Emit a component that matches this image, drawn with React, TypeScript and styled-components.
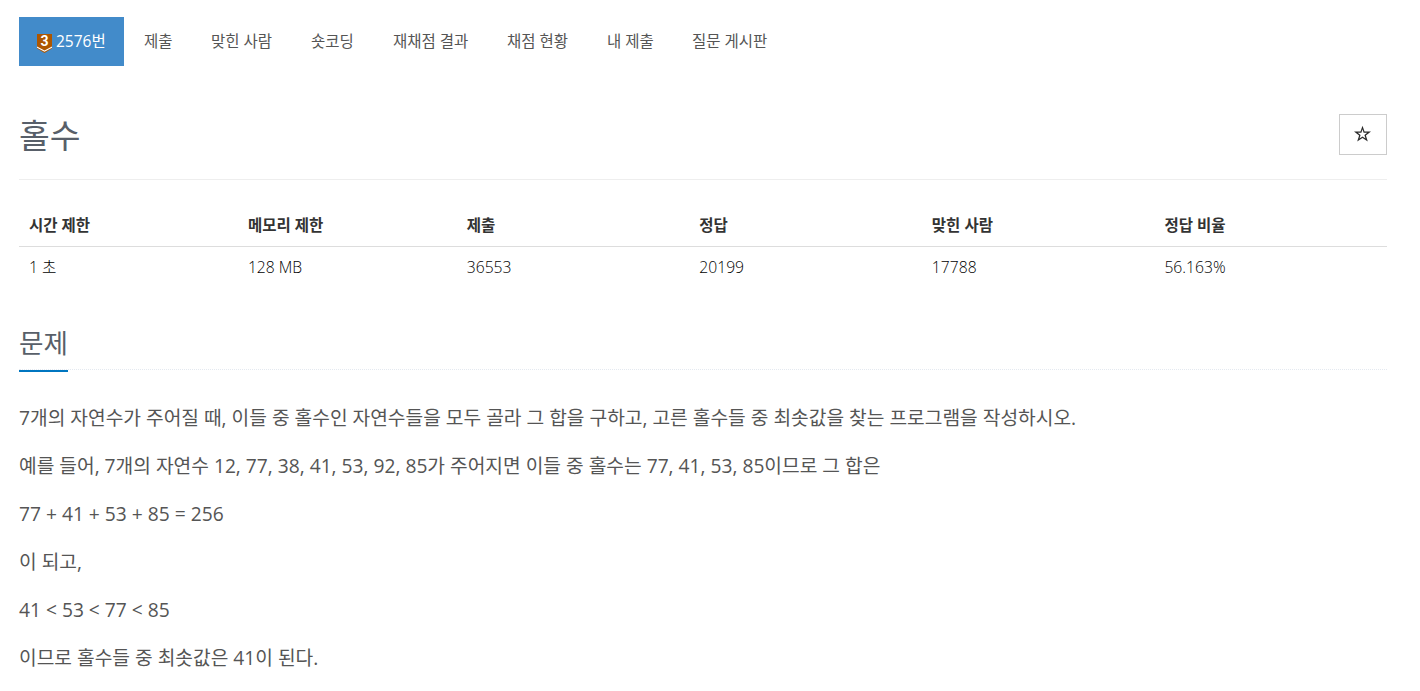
import styled, { createGlobalStyle } from "styled-components";

const GlobalStyle = createGlobalStyle`
  * {
    box-sizing: border-box;
  }

  body {
    margin: 0;
    background: #fff;
    color: #333;
    font-family: "Open Sans", "Noto Sans CJK KR", sans-serif;
    font-size: 15.7px;
    line-height: 24px;
  }
`;

const Page = styled.main`
  width: 1420px;
  height: 691px;
  overflow: hidden;
  padding: 17px 33px 0 19px;
`;

const Menu = styled.nav`
  display: flex;
  height: 49px;
`;

const MenuItem = styled.a<{ $width: number; $active?: boolean }>`
  display: flex;
  align-items: center;
  gap: 3px;
  width: ${({ $width }) => $width}px;
  padding: 0 0 2px ${({ $active }) => ($active ? 17 : 20)}px;
  white-space: nowrap;
  font-size: 15.5px;
  color: ${({ $active }) => ($active ? "#fff" : "#555")};
  background: ${({ $active }) => ($active ? "#428bca" : "transparent")};

  svg {
    margin-top: 5px;
  }
`;

const Header = styled.header`
  display: flex;
  justify-content: space-between;
  height: 114px;
  padding-top: 48px;
  border-bottom: 1px solid #eee;
`;

const Title = styled.h1`
  margin: 0;
  font-size: 33.5px;
  font-weight: 400;
  line-height: 42px;
  color: #585f69;
`;

const FavoriteButton = styled.button`
  display: flex;
  align-items: center;
  justify-content: center;
  width: 48px;
  height: 41px;
  padding: 0 0 1px;
  border: 1px solid #ccc;
  background: #fff;
`;

const InfoTable = styled.table`
  width: 100%;
  margin-top: 24px;
  border-collapse: collapse;
  table-layout: fixed;
`;

const HeadCell = styled.th<{ $width: string }>`
  width: ${({ $width }) => $width};
  height: 42px;
  padding: 0 10px;
  border-bottom: 1px solid #ddd;
  text-align: left;
  font-size: 15.5px;
  font-weight: 700;
`;

const Cell = styled.td`
  height: 41px;
  padding: 0 10px;
  font-weight: 300;
  color: #000;
`;

const SectionHeader = styled.div`
  display: flex;
  height: 50px;
  margin-top: 33px;
  border-bottom: 1px dotted #e4e9f0;
`;

const SectionTitle = styled.h2`
  height: 52px;
  margin: 0;
  border-bottom: 2px solid #0076c0;
  font-size: 26.6px;
  font-weight: 400;
  line-height: 46px;
  color: #585f69;
`;

const Description = styled.section`
  padding-top: 33px;
`;

const Paragraph = styled.p`
  height: 30px;
  margin: 0 0 18px;
  font-size: 19.22px;
  line-height: 30px;
  white-space: nowrap;
  color: #555;
`;

const menu = [
  { label: "제출", width: 67 },
  { label: "맞힌 사람", width: 100 },
  { label: "숏코딩", width: 82 },
  { label: "재채점 결과", width: 114 },
  { label: "채점 현황", width: 100 },
  { label: "내 제출", width: 85 },
  { label: "질문 게시판", width: 114 },
];

const limits = [
  { label: "시간 제한", value: "1 초", width: "16%" },
  { label: "메모리 제한", value: "128 MB", width: "16%" },
  { label: "제출", value: "36553", width: "17%" },
  { label: "정답", value: "20199", width: "17%" },
  { label: "맞힌 사람", value: "17788", width: "17%" },
  { label: "정답 비율", value: "56.163%", width: "17%" },
];

const paragraphs = [
  "7개의 자연수가 주어질 때, 이들 중 홀수인 자연수들을 모두 골라 그 합을 구하고, 고른 홀수들 중 최솟값을 찾는 프로그램을 작성하시오.",
  "예를 들어, 7개의 자연수 12, 77, 38, 41, 53, 92, 85가 주어지면 이들 중 홀수는 77, 41, 53, 85이므로 그 합은",
  "77 + 41 + 53 + 85 = 256",
  "이 되고,",
  "41 < 53 < 77 < 85",
  "이므로 홀수들 중 최솟값은 41이 된다.",
];

const TierBadge = () => (
  <svg width="17" height="20" viewBox="0 0 17 20">
    <path d="M1 1h15v14.500l-7.500 4.500L1 15.500z" fill="#ad5600" />
    <path d="M1 13.500l7.500 4 7.500-4v1.300l-7.500 4L1 14.800z" fill="#fff" />
    <text
      x="8.5"
      y="13"
      textAnchor="middle"
      fontFamily="Roboto"
      fontSize="14"
      fontWeight="700"
      fill="#fff"
    >
      3
    </text>
  </svg>
);

const Star = () => (
  <svg width="18" height="18" viewBox="0 0 18 18">
    <path
      d="M8.500 0.800L10.500 6.400H17L11.900 10.400L13.800 16.500L8.500 13L3.200 16.500L5.100 10.400L0 6.400H6.500ZM8.500 4.300L7.400 7.700H3.700L6.600 10L5.500 13.500L8.500 11.500L11.500 13.500L10.400 10L13.300 7.700H9.600Z"
      fill="#2b2b2b"
      fillRule="evenodd"
    />
  </svg>
);

export default function App() {
  return (
    <Page>
      <GlobalStyle />
      <Menu>
        <MenuItem $width={105} $active>
          <TierBadge />
          2576번
        </MenuItem>
        {menu.map(({ label, width }) => (
          <MenuItem key={label} $width={width}>
            {label}
          </MenuItem>
        ))}
      </Menu>
      <Header>
        <Title>홀수</Title>
        <FavoriteButton aria-label="즐겨찾기">
          <Star />
        </FavoriteButton>
      </Header>
      <InfoTable>
        <thead>
          <tr>
            {limits.map(({ label, width }) => (
              <HeadCell key={label} $width={width}>
                {label}
              </HeadCell>
            ))}
          </tr>
        </thead>
        <tbody>
          <tr>
            {limits.map(({ label, value }) => (
              <Cell key={label}>{value}</Cell>
            ))}
          </tr>
        </tbody>
      </InfoTable>
      <SectionHeader>
        <SectionTitle>문제</SectionTitle>
      </SectionHeader>
      <Description>
        {paragraphs.map((text) => (
          <Paragraph key={text}>{text}</Paragraph>
        ))}
      </Description>
    </Page>
  );
}
